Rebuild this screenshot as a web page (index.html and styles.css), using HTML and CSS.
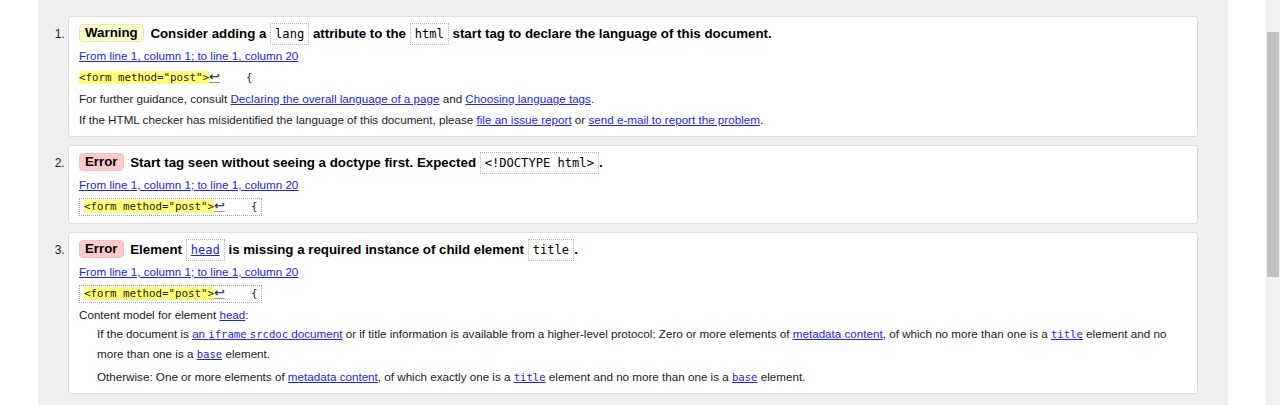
FILE: index.html
```html
<!DOCTYPE html>
<html lang="en">
<head>
<meta charset="utf-8">
<title>Validation messages</title>
<link rel="stylesheet" href="styles.css">
</head>
<body>
<div class="page">
  <div class="gutter"></div>
  <main class="panel">
    <ol class="messages">
      <li class="msg">
        <p class="title"><strong class="badge warning">Warning</strong> <span>Consider adding a <code class="tcode">lang</code> attribute to the <code class="tcode">html</code> start tag to declare the language of this document.</span></p>
        <p class="line"><a href="#">From line 1, column 1; to line 1, column 20</a></p>
        <p class="line"><code class="extract plain"><b class="hl">&lt;form method="post"&gt;</b><span class="lf">↩</span>    {</code></p>
        <p class="line">For further guidance, consult <a href="#">Declaring the overall language of a page</a> and <a href="#">Choosing language tags</a>.</p>
        <p class="line">If the HTML checker has misidentified the language of this document, please <a href="#">file an issue report</a> or <a href="#">send e-mail to report the problem</a>.</p>
      </li>
      <li class="msg">
        <p class="title"><strong class="badge error">Error</strong> <span>Start tag seen without seeing a doctype first. Expected <code class="tcode">&lt;!DOCTYPE html&gt;</code>.</span></p>
        <p class="line"><a href="#">From line 1, column 1; to line 1, column 20</a></p>
        <p class="line"><code class="extract"><b class="hl">&lt;form method="post"&gt;</b><span class="lf">↩</span>    {</code></p>
      </li>
      <li class="msg last">
        <p class="title"><strong class="badge error">Error</strong> <span>Element <code class="tcode"><a href="#">head</a></code> is missing a required instance of child element <code class="tcode">title</code>.</span></p>
        <p class="line"><a href="#">From line 1, column 1; to line 1, column 20</a></p>
        <p class="line"><code class="extract"><b class="hl">&lt;form method="post"&gt;</b><span class="lf">↩</span>    {</code></p>
        <p class="line">Content model for element <a href="#">head</a>:</p>
        <dl class="model">
          <dd>If the document is <a href="#">an <code>iframe</code> <code>srcdoc</code> document</a> or if title information is available from a higher-level protocol: Zero or more elements of <a href="#">metadata content</a>, of which no more than one is a <a href="#"><code>title</code></a> element and no more than one is a <a href="#"><code>base</code></a> element.</dd>
          <dd>Otherwise: One or more elements of <a href="#">metadata content</a>, of which exactly one is a <a href="#"><code>title</code></a> element and no more than one is a <a href="#"><code>base</code></a> element.</dd>
        </dl>
      </li>
    </ol>
  </main>
  <div class="gutter right"></div>
  <div class="scrollbar"><div class="thumb"></div></div>
</div>
</body>
</html>
```
FILE: styles.css
```css
html, body {
  margin: 0;
  padding: 0;
  background: #ffffff;
}
body {
  font-family: "Liberation Sans", Arial, sans-serif;
  font-size: 11.65px;
  color: #1a1a1a;
}
.page {
  display: flex;
  height: 405px;
  overflow: hidden;
}
.gutter {
  width: 38px;
  flex: none;
}
.panel {
  width: 1190px;
  flex: none;
  background: #efefef;
  padding: 16px 30px 0 30px;
  box-sizing: border-box;
}
.scrollbar {
  width: 14px;
  flex: none;
  background: #f1f1f1;
  padding: 32px 1px 0 1px;
  box-sizing: border-box;
}
.thumb {
  height: 245px;
  background: #c1c1c1;
}
.messages {
  margin: 0;
  padding: 0;
  display: flex;
  flex-direction: column;
  gap: 8px;
}
.msg {
  background: #ffffff;
  border: 1px solid #dcdcdc;
  border-radius: 3px;
  padding: 7px 10px 7px 10px;
  font-size: 11.65px;
}
.msg.last {
  padding-bottom: 6px;
}
.msg::marker {
  font-size: 12px;
  color: #222;
}
p {
  margin: 0;
}
.title {
  font-size: 13.3px;
  font-weight: bold;
  line-height: 20px;
  color: #000;
}
.line {
  margin-top: 3px;
  line-height: 18px;
}
.badge {
  display: inline-block;
  line-height: 16px;
  padding: 0 5px;
  border-radius: 4px;
  margin-right: 3px;
  vertical-align: 1px;
}
.badge.warning {
  background: #ffffcc;
  border: 1px solid #ebe6b4;
}
.badge.error {
  background: #fbcaca;
  border: 1px solid #f5c0c0;
}
code {
  font-family: "DejaVu Sans Mono", monospace;
  font-size: 0.91em;
  line-height: 1;
}
.tcode {
  font-weight: normal;
  border: 1px dotted #b8b8b8;
  padding: 3px 4px;
}
.tcode a {
  font-weight: normal;
}
a {
  color: #2424e6;
  text-decoration: underline;
}
.extract {
  display: inline-block;
  vertical-align: middle;
  white-space: pre;
  border: 1px dotted #a8a8a8;
  padding: 0 4px;
  line-height: 16px;
  color: #222;
  font-size: 10.8px;
}
.extract.plain {
  border: 0;
  padding: 1px 0;
}
.hl {
  font-weight: normal;
  background: #ffff78;
}
.lf {
  font-family: "DejaVu Sans", sans-serif;
  font-size: 13px;
  line-height: 0;
  text-decoration: underline;
  text-decoration-color: #999;
}
.model {
  margin: 0;
}
.model dd {
  margin: 0 0 0 18px;
  line-height: 20px;
}
.model dd + dd {
  margin-top: 3px;
}
```
